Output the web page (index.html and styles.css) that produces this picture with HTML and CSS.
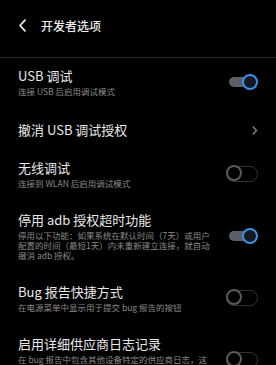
FILE: index.html
```html
<!DOCTYPE html>
<html lang="zh-CN">
<head>
<meta charset="utf-8">
<link rel="stylesheet" href="styles.css">
</head>
<body>
<div class="screen">
  <header class="header">
    <svg class="back" width="9" height="13" viewBox="0 0 9 13"><path d="M7 1.2 L2 6.5 L7 11.8" fill="none" stroke="#f2f2f2" stroke-width="1.7" stroke-linecap="round" stroke-linejoin="round"/></svg>
    <span class="title">开发者选项</span>
  </header>
  <div class="list">
    <div class="item">
      <div class="text">
        <div class="label">USB 调试</div>
        <div class="desc">连接 USB 后启用调试模式</div>
      </div>
      <span class="switch on"><span class="track"></span><span class="thumb"></span></span>
    </div>
    <div class="item single">
      <div class="text">
        <div class="label">撤消 USB 调试授权</div>
      </div>
      <svg class="chev" width="6" height="9" viewBox="0 0 6 9"><path d="M1.2 1 L4.6 4.5 L1.2 8" fill="none" stroke="#8a8a8a" stroke-width="1.3" stroke-linecap="round" stroke-linejoin="round"/></svg>
    </div>
    <div class="item">
      <div class="text">
        <div class="label">无线调试</div>
        <div class="desc">连接到 WLAN 后启用调试模式</div>
      </div>
      <span class="switch off"><span class="thumb"></span></span>
    </div>
    <div class="item">
      <div class="text">
        <div class="label">停用 adb 授权超时功能</div>
        <div class="desc">停用以下功能：如果系统在默认时间（7天）或用户配置的时间（最短1天）内未重新建立连接，就自动撤消 adb 授权。</div>
      </div>
      <span class="switch on"><span class="track"></span><span class="thumb"></span></span>
    </div>
    <div class="item">
      <div class="text">
        <div class="label">Bug 报告快捷方式</div>
        <div class="desc">在电源菜单中显示用于提交 bug 报告的按钮</div>
      </div>
      <span class="switch off"><span class="thumb"></span></span>
    </div>
    <div class="item">
      <div class="text">
        <div class="label">启用详细供应商日志记录</div>
        <div class="desc">在 bug 报告中包含其他设备特定的供应商日志，这可能会包含隐私信息、使用更多电池电量和/或使用更多存储空间。</div>
      </div>
      <span class="switch off"><span class="thumb"></span></span>
    </div>
  </div>
</div>
</body>
</html>
```
FILE: styles.css
```css
html, body {
  margin: 0;
  padding: 0;
  background: #000;
}
body {
  font-family: "Noto Sans CJK SC", "Noto Sans", sans-serif;
  color: #e8e8e8;
  overflow: hidden;
}
.screen {
  width: 276px;
  height: 365px;
  overflow: hidden;
  background: #000;
}
.header {
  box-sizing: border-box;
  height: 58px;
  padding: 0 18px 6px 18px;
  display: flex;
  align-items: center;
  gap: 14px;
  border-bottom: 1px solid #2a2a2a;
}
.back {
  display: block;
}
.title {
  font-size: 12px;
  font-weight: 500;
  line-height: 16px;
  color: #f0f0f0;
}
.list {
  display: flex;
  flex-direction: column;
}
.item {
  display: flex;
  align-items: center;
  padding: 9px 18px 14px 18px;
  gap: 3px;
}
.item.single {
  padding: 11px 18px 11px 18px;
}
.text {
  flex: 1;
  min-width: 0;
}
.label {
  font-size: 13px;
  line-height: 18px;
  color: #e8e8e8;
}
.desc {
  margin-top: 1px;
  font-size: 8.5px;
  line-height: 10px;
  color: #8a8a8a;
  padding-right: 9px;
}
.chev {
  display: block;
  flex: none;
}
.switch {
  position: relative;
  flex: none;
  width: 32px;
  height: 16px;
}
.switch .thumb {
  position: absolute;
  top: 0;
  box-sizing: border-box;
  width: 16px;
  height: 16px;
  border-radius: 50%;
}
.switch.on .track {
  position: absolute;
  left: 3px;
  top: 3px;
  width: 20px;
  height: 10px;
  border-radius: 5px;
  background: #5b6068;
}
.switch.on .thumb {
  right: 0;
  border: 2.5px solid #3a8fe8;
  background: #15181c;
}
.switch.off {
  box-sizing: border-box;
  border: 1.5px solid #333;
  border-radius: 8px;
}
.switch.off .thumb {
  left: -1.5px;
  top: -1.5px;
  border: 2px solid #5a5a5a;
  background: #000;
}
```
